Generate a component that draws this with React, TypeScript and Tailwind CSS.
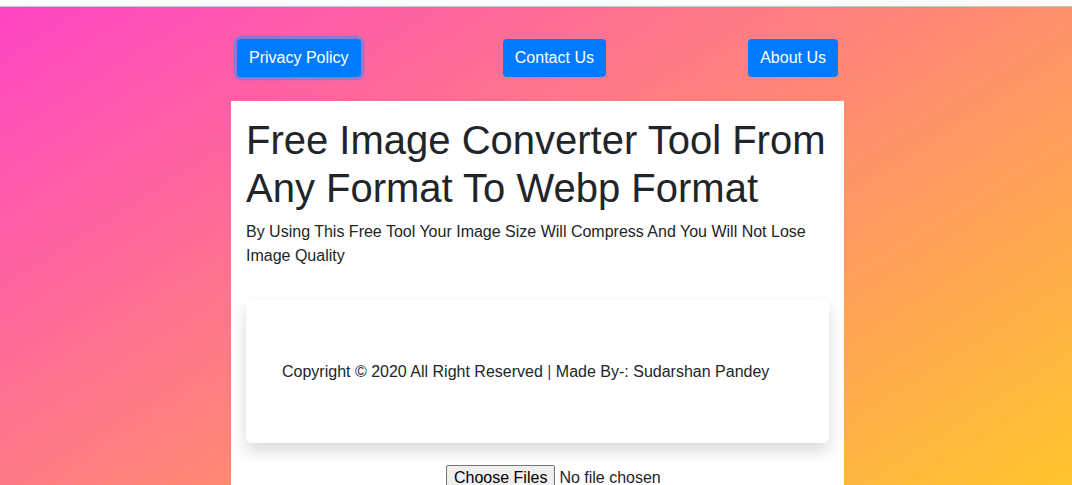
import React from 'react';

const NAV_LINKS = ['Privacy Policy', 'Contact Us', 'About Us'];

export default function App() {
  return (
    <div className="font-['Liberation_Sans',Arial,sans-serif] text-[#212529]">
      {/* thin browser strip at the very top */}
      <div className="h-[7px] bg-white border-b border-[#c8c8c8]" />

      <div className="h-[680px] bg-[linear-gradient(to_bottom_right,#ff45c5,#ffdc12)] pt-[32px]">
        <div className="w-[613px] ml-[231px]">
          {/* top links */}
          <div className="flex justify-between px-[6px]">
            {NAV_LINKS.map((label, i) => (
              <button
                key={label}
                className={
                  'h-[38px] px-[12px] rounded-[4px] bg-[#007bff] text-white text-[16px] leading-[24px] ' +
                  (i === 0 ? 'shadow-[0_0_0_3.2px_rgba(38,143,255,0.5)]' : '')
                }
              >
                {label}
              </button>
            ))}
          </div>

          {/* main card */}
          <div className="mt-[24px] bg-white px-[15px] pt-[15px] pb-[120px]">
            <h1 className="text-[40px] leading-[48px] font-normal mb-[8px]">
              Free Image Converter Tool From Any Format To Webp Format
            </h1>
            <p className="text-[16px] leading-[24px] mb-[32px]">
              By Using This Free Tool Your Image Size Will Compress And You Will Not Lose Image Quality
            </p>

            <div className="h-[143px] flex items-center pl-[36px] rounded-[5px] bg-white shadow-[0_8px_16px_rgba(0,0,0,0.15)]">
              <p className="text-[16px] leading-[24px]">
                Copyright © 2020 All Right Reserved <span className="text-[#6a2a8c]">|</span> Made By-: Sudarshan Pandey
              </p>
            </div>

            <div className="flex pl-[200px] mt-[22px]">
              <input
                type="file"
                multiple
                className="text-[16px] leading-[20px] file:mr-[4px] file:px-[7px] file:py-[2px] file:border file:border-[#767676] file:rounded-[2px] file:bg-[#efefef] file:text-black"
              />
            </div>
          </div>
        </div>
      </div>
    </div>
  );
}
